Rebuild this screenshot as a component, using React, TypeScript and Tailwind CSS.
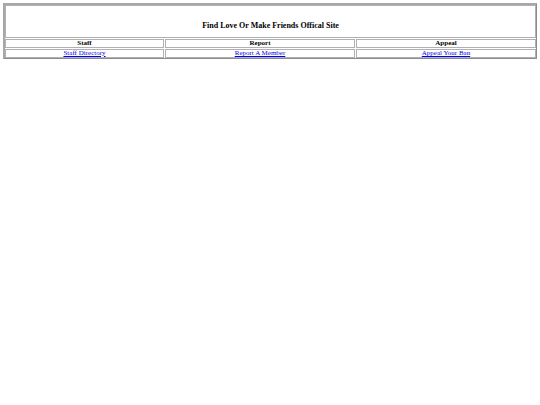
export default function App() {
  const cols = [
    { head: 'Staff', link: 'Staff Directory' },
    { head: 'Report', link: 'Report A Member' },
    { head: 'Appeal', link: 'Appeal Your Ban' },
  ];

  return (
    <div className="min-h-[405px] bg-white p-[3px] text-black" style={{ fontFamily: '"Liberation Serif", "Times New Roman", serif' }}>
      <div className="border-l-2 border-t-2 border-r border-b border-[#a8a8a8] border-r-[#8c8c8c] border-b-[#8c8c8c]">
        <div className="grid grid-cols-[159px_190px_1fr] gap-px">
          <div className="col-span-3 flex h-[33px] items-end justify-center border border-[#b0b0b0] pb-[7px] text-[8px] font-bold leading-none">
            Find Love Or Make Friends Offical Site
          </div>
          {cols.map((c) => (
            <div key={c.head} className="flex h-[9px] items-center justify-center border border-[#b0b0b0] text-[7px] font-bold leading-none">
              {c.head}
            </div>
          ))}
          {cols.map((c) => (
            <div key={c.link} className="flex h-[9px] items-center justify-center border border-[#b0b0b0] text-[7px] leading-none">
              <a href="#" className="text-[#0000ee] underline">{c.link}</a>
            </div>
          ))}
        </div>
      </div>
    </div>
  );
}
